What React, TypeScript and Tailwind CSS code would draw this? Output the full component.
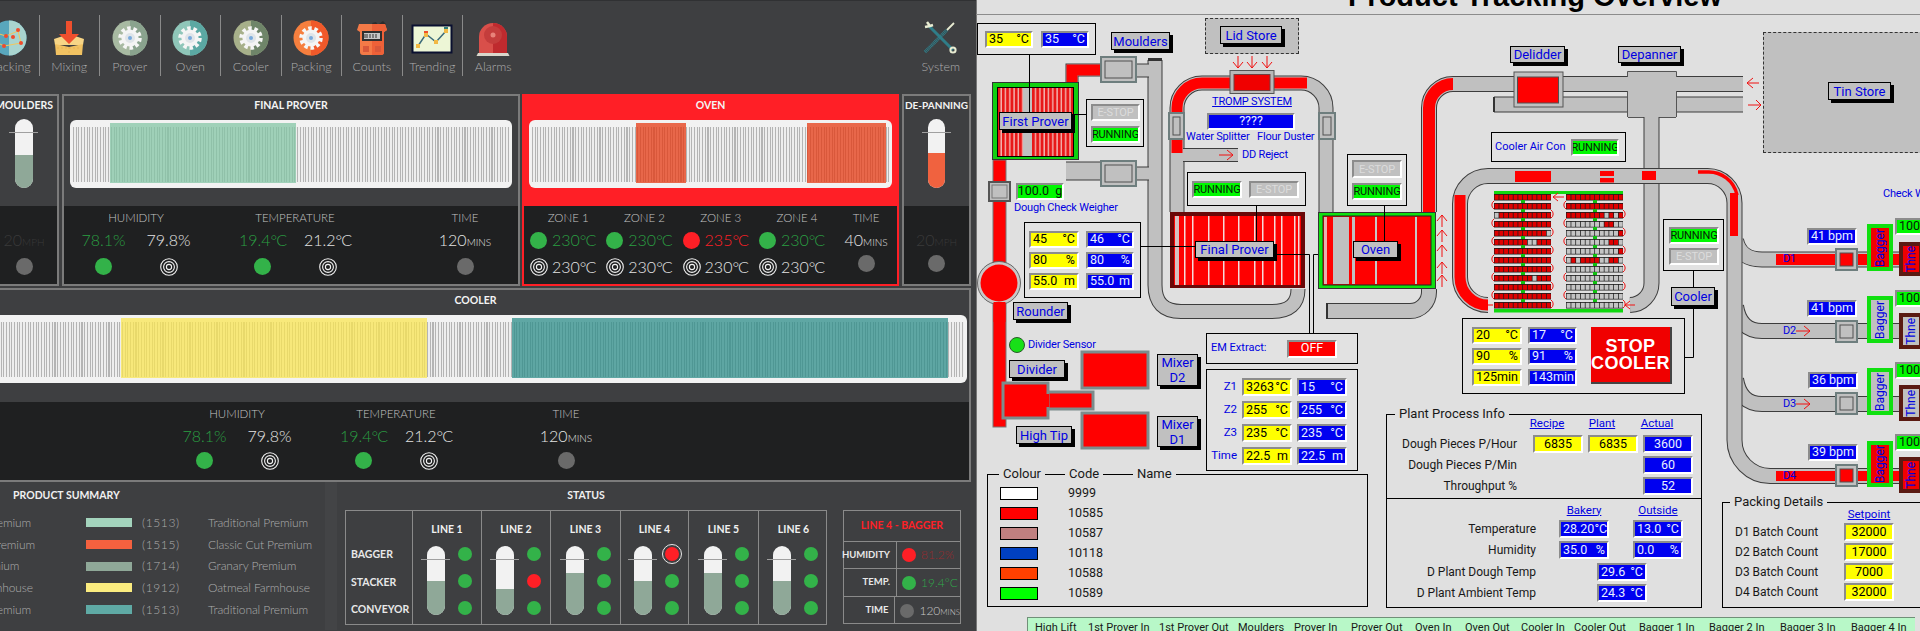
import React from 'react'

const stripes =
  'bg-[repeating-linear-gradient(90deg,#b4b4b4_0px,#b4b4b4_1px,#eeeeee_1px,#eeeeee_2.7px)]'

function Rings() {
  return (
    <svg width="18" height="18" viewBox="0 0 18 18" className="shrink-0">
      <circle cx="9" cy="9" r="8.3" fill="none" stroke="#f2f2f2" strokeWidth="1.1" />
      <circle cx="9" cy="9" r="5.4" fill="none" stroke="#f2f2f2" strokeWidth="1.1" />
      <circle cx="9" cy="9" r="2.6" fill="none" stroke="#f2f2f2" strokeWidth="1.1" />
    </svg>
  )
}

const Dot = ({ c = 'bg-[#33b249]', className = 'w-[17px] h-[17px]' }: { c?: string; className?: string }) => (
  <div className={`rounded-full shrink-0 ${c} ${className}`} />
)

const Val = ({ c = 'text-[#e4e4e4]', children }: { c?: string; children: React.ReactNode }) => (
  <div className={`h-[20px] flex items-center justify-center whitespace-nowrap text-[16px] font-light ${c}`}>
    <span>{children}</span>
  </div>
)

const Deg = ({ v }: { v: string }) => (
  <>
    {v}
    <span className="tracking-[-1px]">°C</span>
  </>
)

const Small = ({ children }: { children: React.ReactNode }) => <span className="text-[10px] tracking-normal">{children}</span>

function Label({ children }: { children: React.ReactNode }) {
  return <div className="h-[24px] flex items-center justify-center whitespace-nowrap text-[11.5px] font-light text-[#c4c4c4]">{children}</div>
}

function ThreeMetrics({ className, dotGap }: { className: string; dotGap: string }) {
  const groups = [
    { label: 'HUMIDITY', a: <>78.1%</>, b: <>79.8%</> },
    { label: 'TEMPERATURE', a: <Deg v="19.4" />, b: <Deg v="21.2" /> },
  ]
  return (
    <div className={`flex ${className}`}>
      {groups.map((g) => (
        <div key={g.label} className="w-[130px] mr-[29px]">
          <Label>{g.label}</Label>
          <div className="grid grid-cols-2">
            <Val c="text-[#2a9f42]">{g.a}</Val>
            <Val>{g.b}</Val>
            <div className={`flex justify-center ${dotGap}`}><Dot /></div>
            <div className={`flex justify-center ${dotGap}`}><Rings /></div>
          </div>
        </div>
      ))}
      <div className="w-[60px] ml-[46px]">
        <Label>TIME</Label>
        <Val>120<Small>MINS</Small></Val>
        <div className={`flex justify-center ${dotGap}`}><Dot c="bg-[#6a6a6a]" /></div>
      </div>
    </div>
  )
}

function Thermo({ fill, tone = 'bg-[#8fa898]' }: { fill: string; tone?: string }) {
  return (
    <div className="relative w-[17.5px] h-[69px] shrink-0">
      <div className="w-full h-full rounded-full overflow-hidden bg-[#f2f2f2] flex flex-col justify-end">
        <div className={`${fill} ${tone}`} />
      </div>
      <div className="absolute -left-[6px] top-[13px] w-[29px] h-px bg-[#a0a0a0]" />
    </div>
  )
}

function Bar({ className, overlays }: { className: string; overlays: string[] }) {
  return (
    <div className={`relative h-[68px] rounded-md bg-[#f2f2f2] pt-[7px] px-[3px] ${className}`}>
      <div className={`h-[55px] ${stripes}`} />
      {overlays.map((o) => (
        <div key={o} className={`absolute top-[3px] h-[60px] ${o}`} />
      ))}
    </div>
  )
}

function GearIcon({ a, b }: { a: string; b: string }) {
  return (
    <svg width="36" height="36" viewBox="0 0 36 36">
      <circle cx="18" cy="18" r="17.5" fill={a} />
      <path d="M18 .5A17.5 17.5 0 0 1 18 35.5Z" fill={b} />
      <circle cx="18" cy="18" r="9.5" fill="none" stroke="#f6f6f6" strokeWidth="4.5" strokeDasharray="3.4 2.57" />
      <circle cx="18" cy="18" r="8.6" fill="#f4f4f4" />
      <circle cx="18" cy="18" r="5" fill="#dfe4e8" />
      <circle cx="18" cy="18" r="2" fill="#78a9dc" />
    </svg>
  )
}

const navIcons: Record<string, React.ReactNode> = {
  Tracking: (
    <svg width="36" height="36" viewBox="0 0 36 36">
      <circle cx="18" cy="18" r="17.5" fill="#59a7bd" />
      <path d="M18 .5A17.5 17.5 0 0 1 18 35.5Z" fill="#a9d4cf" />
      <path d="M5 13l10 3 12-5 3 12-17 3-8-4z" fill="none" stroke="#f2c75c" strokeWidth="1" />
      <g fill="#ef4b2c">
        <circle cx="5" cy="13" r="2" /><circle cx="15" cy="16" r="2" /><circle cx="27" cy="10" r="2" />
        <circle cx="30" cy="23" r="2" /><circle cx="13" cy="26" r="2" /><circle cx="22" cy="17" r="2" />
      </g>
    </svg>
  ),
  Mixing: (
    <svg width="36" height="36" viewBox="0 0 36 36">
      <path d="M3 19l15-5 15 5-1 6H4z" fill="#f7d586" />
      <path d="M4 24l14 3 14-3-1 11H5z" fill="#f1c262" />
      <path d="M18 27v8M6 28h24" stroke="#e0a94a" strokeWidth=".6" strokeDasharray="2 2" />
      <path d="M15 1h6v13h7L18 24 8 14h7z" fill="#ef4f2d" />
    </svg>
  ),
  Counts: (
    <svg width="36" height="36" viewBox="0 0 36 36">
      <path d="M25 4l4-3 3 3-3 3zM18 3l4-1 2 3-4 1z" fill="#2c2c2c" />
      <path d="M5 4h26l2 6-3 2v20q0 3-3 3H9q-3 0-3-3V12L3 10z" fill="#f47a47" />
      <path d="M18 4h13l2 6-3 2v20q0 3-3 3h-9z" fill="#ee6138" />
      <rect x="8" y="11" width="20" height="10" fill="#2f2f2f" />
      <rect x="10" y="13" width="16" height="6" fill="#c7c7c7" />
      <path d="M11 18v-4M13 18v-4M16 18v-4M19 18v-4M22 18v-4" stroke="#333" strokeWidth="1" />
      <rect x="9" y="26" width="6" height="6" fill="#d9583a" /><rect x="21" y="26" width="6" height="6" fill="#d9583a" />
    </svg>
  ),
  Trending: (
    <svg width="42" height="36" viewBox="0 0 42 36">
      <rect x="1.5" y="5.5" width="39" height="27" fill="#edf6d6" stroke="#0a1030" strokeWidth="2" />
      <polyline points="7,26 15,14 25,22 35,11" fill="none" stroke="#3b6a78" strokeWidth="1.5" />
      <g fill="#f2b843">
        <rect x="5" y="24" width="4" height="4" /><rect x="13" y="13" width="4" height="4" />
        <rect x="23" y="20" width="4" height="4" /><rect x="33" y="9" width="4" height="4" />
      </g>
      <rect x="13" y="11" width="4" height="2" fill="#ef4f2d" /><rect x="33" y="7" width="4" height="2" fill="#2f7d78" />
    </svg>
  ),
  Alarms: (
    <svg width="36" height="36" viewBox="0 0 36 36">
      <path d="M4 33V17a14 14 0 0 1 28 0v16z" fill="#d94f4a" />
      <path d="M18 3a14 14 0 0 1 14 14v16H18z" fill="#bf2a2e" />
      <circle cx="18" cy="15" r="9" fill="#c43d3c" />
      <circle cx="18" cy="15" r="2.5" fill="#e8837a" />
      <path d="M3 33h30l2 4H1z" fill="#d9d6cb" />
    </svg>
  ),
  System: (
    <svg width="36" height="36" viewBox="0 0 36 36">
      <path d="M6 6l24 24" stroke="#2f7d88" strokeWidth="3" />
      <path d="M2 32L24 10" stroke="#2f7d88" strokeWidth="3.5" strokeDasharray="1 .6" />
      <path d="M24 10L31 3" stroke="#e8ecd2" strokeWidth="1.8" />
      <path d="M4 2l3 4 3-1M7 6L2 7" fill="none" stroke="#e8ecd2" strokeWidth="2.5" />
      <circle cx="30" cy="30" r="2.6" fill="none" stroke="#e8ecd2" strokeWidth="2" />
    </svg>
  ),
}

const gears: Record<string, [string, string]> = {
  Prover: ['#a8baa2', '#8aa38e'],
  Oven: ['#8fc6b9', '#5ba8a3'],
  Cooler: ['#a7b08a', '#6f8569'],
  Packing: ['#f67f3e', '#f0592a'],
}

const nav = ['Tracking', 'Mixing', 'Prover', 'Oven', 'Cooler', 'Packing', 'Counts', 'Trending', 'Alarms']

function NavItem({ name, last }: { name: string; last?: boolean }) {
  return (
    <div className={`w-[60.5px] h-[61px] mt-[14px] flex flex-col items-center ${last ? '' : 'border-r border-[#8a8a8a]'}`}>
      <div className="mt-[5px] h-[36px] flex items-center justify-center">
        {gears[name] ? <GearIcon a={gears[name][0]} b={gears[name][1]} /> : navIcons[name]}
      </div>
      <div className="mt-[3px] h-[16px] flex items-center text-[12.5px] font-light text-[#adadad]">{name}</div>
    </div>
  )
}

const title = 'h-[19px] flex items-center justify-center whitespace-nowrap text-[10.5px] font-bold text-[#f4f4f4]'

const products = [
  { name: 'Traditional Premium', code: '(1513)', c: 'bg-[#a3d3bc]' },
  { name: 'Classic Cut Premium', code: '(1515)', c: 'bg-[#f4613f]' },
  { name: 'Granary Premium', code: '(1714)', c: 'bg-[#8fa898]' },
  { name: 'Oatmeal Farmhouse', code: '(1912)', c: 'bg-[#fbec7f]' },
  { name: 'Traditional Premium', code: '(1513)', c: 'bg-[#5faaa5]' },
]

const lines = [
  { n: 'LINE 1', fill: 'h-[34px]', ml: 'ml-[14px]', s: ['g', 'g', 'g'] },
  { n: 'LINE 2', fill: 'h-[26px]', ml: 'ml-[14px]', s: ['g', 'r', 'g'] },
  { n: 'LINE 3', fill: 'h-[42px]', ml: 'ml-[15px]', s: ['g', 'g', 'g'] },
  { n: 'LINE 4', fill: 'h-[34px]', ml: 'ml-[13px]', s: ['a', 'g', 'g'] },
  { n: 'LINE 5', fill: 'h-[42px]', ml: 'ml-[15px]', s: ['g', 'g', 'g'] },
  { n: 'LINE 6', fill: 'h-[34px]', ml: 'ml-[14px]', s: ['g', 'g', 'g'] },
]

function StatusDot({ s }: { s: string }) {
  if (s === 'a')
    return (
      <div className="w-[14px] h-[14px] relative">
        <div className="w-[14px] h-[14px] rounded-full bg-[#ff1f26]" />
        <div className="absolute -left-[3px] -top-[3px] w-[20px] h-[20px] rounded-full border border-[#e8e8e8]" />
      </div>
    )
  return <Dot c={s === 'r' ? 'bg-[#ff1f26]' : 'bg-[#33b249]'} className="w-[14px] h-[14px]" />
}

function Dashboard() {
  return (
    <div className="w-[976px] h-[631px] shrink-0 overflow-hidden bg-[#3e3f41] font-['Lato',sans-serif] flex flex-col">
      <div className="h-[94px] shrink-0 border-t-2 border-[#303133] flex -mt-px">
        <div className="flex -ml-[21px]">
          {nav.map((n, i) => (
            <NavItem key={n} name={n} last={i === nav.length - 1} />
          ))}
        </div>
        <div className="ml-auto mr-[5px]"><NavItem name="System" last /></div>
      </div>

      <div className="h-[192px] shrink-0 flex mt-px">
        <div className="-ml-[11px] w-[70px] border-2 border-[#7b7b7b] flex flex-col">
          <div className="h-[110px]">
            <div className={title}>MOULDERS</div>
            <div className="flex justify-center mt-[4px]"><Thermo fill="h-[33px]" /></div>
          </div>
          <div className="h-[78px] bg-[#1f2021] flex flex-col items-center pt-[24px]">
            <Val c="text-[#3a3a3a]">20<Small>MPH</Small></Val>
            <div className="mt-[8px]"><Dot c="bg-[#6a6a6a]" /></div>
          </div>
        </div>

        <div className="ml-[3px] w-[458px] border-2 border-[#7b7b7b] flex flex-col">
          <div className="h-[110px]">
            <div className={title}>FINAL PROVER</div>
            <Bar className="mt-[5px] mx-[6px]" overlays={['left-[40px] w-[186px] bg-[#84c6a6]/75']} />
          </div>
          <ThreeMetrics className="h-[78px] bg-[#1f2021] pl-[7px]" dotGap="mt-[8px]" />
        </div>

        <div className="ml-[2px] w-[377px] border-2 border-[#ff1f26] flex flex-col bg-[#ff1f26]">
          <div className="h-[110px]">
            <div className={title}>OVEN</div>
            <Bar className="mt-[5px] mx-[5px]" overlays={['left-[107px] w-[50px] bg-[#e63a13]/75', 'left-[278px] w-[79px] bg-[#e63a13]/75']} />
          </div>
          <div className="h-[78px] bg-[#1f2021] flex pl-[6px]">
            {['ZONE 1', 'ZONE 2', 'ZONE 3', 'ZONE 4'].map((z, i) => (
              <div key={z} className="w-[76.5px]">
                <Label>{z}</Label>
                <div className="flex items-center h-[20px] gap-[5px]">
                  <Dot c={i === 2 ? 'bg-[#ff1f26]' : 'bg-[#33b249]'} />
                  <Val c={i === 2 ? 'text-[#ff1f26]' : 'text-[#2a9f42]'}><Deg v={i === 2 ? '235' : '230'} /></Val>
                </div>
                <div className="flex items-center h-[18px] gap-[4px] mt-[8px]">
                  <Rings />
                  <Val><Deg v="230" /></Val>
                </div>
              </div>
            ))}
            <div className="w-[62px]">
              <Label>TIME</Label>
              <Val>40<Small>MINS</Small></Val>
              <div className="flex justify-center mt-[5px]"><Dot c="bg-[#6a6a6a]" /></div>
            </div>
          </div>
        </div>

        <div className="ml-[3px] w-[69px] border-2 border-[#7b7b7b] flex flex-col">
          <div className="h-[110px]">
            <div className="h-[19px] flex items-center justify-center whitespace-nowrap text-[10px] font-bold text-[#f4f4f4]">DE-PANNING</div>
            <div className="flex justify-center mt-[4px]"><Thermo fill="h-[35px]" tone="bg-[#f0623f]" /></div>
          </div>
          <div className="h-[78px] bg-[#1f2021] flex flex-col items-center pt-[24px]">
            <Val c="text-[#3a3a3a]">20<Small>MPH</Small></Val>
            <div className="mt-[5px]"><Dot c="bg-[#6a6a6a]" /></div>
          </div>
        </div>
      </div>

      <div className="h-[194px] shrink-0 mt-[2px] -ml-[20px] w-[991px] border-2 border-[#7b7b7b] flex flex-col">
        <div className="h-[112px]">
          <div className="h-[22px] flex items-center justify-center text-[10.5px] font-bold text-[#f4f4f4]">COOLER</div>
          <Bar className="mt-[3px] mx-[2px]" overlays={['left-[137px] w-[306px] bg-[#f9e653]/75', 'left-[528px] w-[436px] bg-[#2e8e89]/75']} />
        </div>
        <ThreeMetrics className="h-[78px] bg-[#1f2021] pl-[190px]" dotGap="mt-[6px]" />
      </div>

      <div className="h-[148px] shrink-0 flex">
        <div className="w-[325px] shrink-0">
          <div className="pl-[13px] h-[28px] flex items-center text-[10.5px] font-bold text-[#f0f0f0]">PRODUCT SUMMARY</div>
          <div className="mt-[2px]">
            {products.map((p, i) => (
              <div key={i} className="h-[21.7px] flex items-center text-[12px] tracking-[-0.1px] font-light text-[#adadad] whitespace-nowrap">
                <div className="-ml-[69px] w-[155px] shrink-0">{p.name}</div>
                <div className={`w-[46px] h-[9px] shrink-0 ${p.c}`} />
                <div className="ml-[10px] w-[66px] shrink-0 tracking-[0.6px]">{p.code}</div>
                <div>{p.name}</div>
              </div>
            ))}
          </div>
        </div>
        <div className="w-[12px] bg-[#434446]" />
        <div className="flex-1 pl-[8px]">
          <div className="w-[482px] h-[28px] flex items-center justify-center text-[10.5px] font-bold text-[#f0f0f0]">STATUS</div>
          <div className="flex">
            <div className="w-[482px] h-[115px] border border-[#8a8a8a] grid grid-cols-[66px_69px_69px_70px_68px_70px_70px]">
              <div className="pt-[37px] pl-[5px] text-[10.5px] font-bold text-[#e8e8e8] flex flex-col gap-[14.5px] leading-[13px]">
                <div>BAGGER</div><div>STACKER</div><div>CONVEYOR</div>
              </div>
              {lines.map((l) => (
                <div key={l.n} className="border-l border-[#8a8a8a]">
                  <div className="h-[35px] pt-[2px] flex items-center justify-center text-[10.5px] font-bold text-[#f0f0f0]">{l.n}</div>
                  <div className={`flex ${l.ml}`}>
                    <Thermo fill={l.fill} />
                    <div className="ml-[13px] pt-px flex flex-col gap-[13px]">
                      {l.s.map((s, i) => <StatusDot key={i} s={s} />)}
                    </div>
                  </div>
                </div>
              ))}
            </div>
            <div className="ml-[16px] w-[118px] h-[114px] border border-[#8a8a8a] text-[9.5px] font-bold text-[#e8e8e8]">
              <div className="h-[30px] flex items-center justify-center text-[10.5px] text-[#ff1f26]">LINE 4 - BAGGER</div>
              {[
                { k: 'HUMIDITY', d: 'bg-[#ff1f26]', v: '81.2%', c: 'text-[#9a2a2e]', h: 'h-[27px]' },
                { k: 'TEMP.', d: 'bg-[#33b249]', v: '19.4°C', c: 'text-[#2fa94a]', h: 'h-[28px]' },
                { k: 'TIME', d: 'bg-[#6a6a6a]', v: '120', c: 'text-[#c8c8c8]', h: 'h-[28px]' },
              ].map((r) => (
                <div key={r.k} className={`flex border-t border-[#8a8a8a] ${r.h}`}>
                  <div className="w-[53px] flex items-center justify-end pr-[6px] border-r border-[#8a8a8a]">{r.k}</div>
                  <div className="flex items-center pl-[5px] gap-[5px] whitespace-nowrap">
                    <Dot c={r.d} className="w-[14px] h-[14px]" />
                    <span className={`text-[12px] font-light ${r.c}`}>{r.v}{r.k === 'TIME' && <span className="text-[8px]">MINS</span>}</span>
                  </div>
                </div>
              ))}
            </div>
          </div>
        </div>
      </div>
    </div>
  )
}

/* ---------- plant overview ---------- */

const tones: Record<string, string> = {
  y: 'bg-[#ffff00] text-black',
  b: 'bg-[#0000f0] text-[#e8f0ff]',
  g: 'bg-[#00f800] text-[#082008]',
  e: 'bg-[#c0c0c0] text-[#dcdcdc]',
  r: 'bg-[#ff0000] text-white',
}

function F({ t, v, u, className = 'h-[17px]' }: { t: string; v: string; u?: string; className?: string }) {
  const small = v === 'RUNNING' || v === 'E-STOP'
  return (
    <div className={`flex items-center ${u ? 'justify-between' : 'justify-center'} px-[2px] border-2 border-t-[#8c8c8c] border-l-[#8c8c8c] border-r-white border-b-white leading-none whitespace-nowrap overflow-hidden ${small ? 'text-[11px] tracking-[-0.1px]' : 'text-[12.5px]'} ${tones[t]} ${className}`}>
      <span>{v}</span>
      {u && <span>{u}</span>}
    </div>
  )
}

function Btn({ className, children }: { className: string; children: React.ReactNode }) {
  return (
    <div className={`absolute flex items-center justify-center text-center leading-[15px] bg-[#c0c0c0] border border-black shadow-[3px_3px_0_#000] text-[13px] text-[#0000e0] whitespace-nowrap ${className}`}>
      {children}
    </div>
  )
}

const Box = ({ className, children }: { className: string; children?: React.ReactNode }) => (
  <div className={`absolute border border-black bg-[#e2e2e2] ${className}`}>{children}</div>
)

const Blue = ({ className, children }: { className: string; children: React.ReactNode }) => (
  <div className={`absolute text-[11px] tracking-[-0.2px] text-[#0000e0] whitespace-pre leading-[16px] ${className}`}>{children}</div>
)

function Legend({ className, children }: { className: string; children: React.ReactNode }) {
  return <div className={`absolute bg-[#e0e0e0] px-[4px] leading-[16px] text-[13px] text-[#181818] ${className}`}>{children}</div>
}

const Pipe = ({ d, w = 14 }: { d: string; w?: number }) => (
  <>
    <path d={d} fill="none" stroke="#3c3c3c" strokeWidth={w + 2} />
    <path d={d} fill="none" stroke="#c0c0c0" strokeWidth={w} />
  </>
)
const Red = ({ d, w = 11 }: { d: string; w?: number }) => <path d={d} fill="none" stroke="#ff0000" strokeWidth={w} />

const Unit = ({ x, y, w, h, red }: { x: number; y: number; w: number; h: number; red?: boolean }) => (
  <>
    <rect x={x} y={y} width={w} height={h} fill="#c0c0c0" stroke="#6e7e7e" strokeWidth="2" />
    <rect x={x + 4} y={y + 4} width={w - 8} height={h - 8} fill={red ? '#ff0000' : '#c0c0c0'} stroke="#505050" strokeWidth="1" />
  </>
)

const rackA = ['111111111111', '111111111111', '011111111111', '111111111111', '111111111110', '111111100111', '111111111111', '111111111111', '111111111111', '111111110111', '111111111111', '111111111111', '111111111111']
const rackB = ['111111111111', '111111111111', '111111110101', '000000001100', '000000000001', '000000000110', '000000000001', '010111100110', '000000000000', '000000000000', '000000000000', '000000000000', '000000000000']

function Rack({ x, rows }: { x: number; rows: string[] }) {
  return (
    <g>
      {rows.map((r, i) => (
        <g key={i}>
          <rect x={x} y={194 + 9 * i} width="57" height="6.5" fill="#1a1a1a" />
          {r.split('').map((c, j) => (
            <rect key={j} x={x + 0.6 + j * 4.74} y={194.8 + 9 * i} width="4" height="5" fill={c === '1' ? '#e00000' : '#c4c4c4'} />
          ))}
          {i < 12 && <rect x={x + 27} y={200 + 9 * i} width="4" height="3" fill="#10c010" />}
          {i % 2 === 0 && i < 12 && <path d={`M${x} ${201 + 9 * i}a4 4.5 0 0 0 0 8`} fill="none" stroke="#f01010" strokeWidth="1" />}
          {i % 2 === 1 && i < 12 && <path d={`M${x + 57} ${201 + 9 * i}a4 4.5 0 0 1 0 8`} fill="none" stroke="#f01010" strokeWidth="1" />}
        </g>
      ))}
    </g>
  )
}

function Diagram() {
  return (
    <svg className="absolute inset-0" width="944" height="631" viewBox="976 0 944 631">
      <defs>
        <pattern id="pr" width="4.3" height="10" patternUnits="userSpaceOnUse">
          <rect width="4.3" height="10" fill="#e81818" />
          <rect x="2.9" width="1.4" height="10" fill="#f2b4b0" />
        </pattern>
      </defs>
      <line x1="976.5" y1="0" x2="976.5" y2="631" stroke="#777" />
      <line x1="976" y1="14.5" x2="1920" y2="14.5" stroke="#8c8c8c" />

      {/* moulders and their pipe */}
      <Pipe d="M1155 60V285Q1155 311.5 1181 311.5H1272Q1298 311.5 1298 289" w={13} />
      <rect x="1148" y="58" width="14" height="3" fill="#333" />
      <Pipe d="M1137 70.5H1149" w={12} />
      <Pipe d="M1137 173.5H1149" w={12} />
      <Pipe d="M1066 171H1100" w={17} />
      <Pipe d="M1072 84V70H1100" w={11} />
      <Red d="M1072 84V70H1105" />
      <Unit x={1101} y={57} w={35} h={25} />
      <Unit x={1101} y={161} w={35} h={25} />

      {/* first prover and rounder */}
      <rect x="993" y="160" width="13" height="267" fill="#ff0000" stroke="#777" />
      <rect x="992.5" y="82.5" width="86" height="77" fill="#10d010" stroke="#333" />
      <rect x="997.5" y="87.5" width="76" height="69" fill="url(#pr)" stroke="#000" />
      <rect x="1023" y="88" width="9" height="68" fill="#c0c0c0" />
      <line x1="1029.5" y1="55" x2="1029.5" y2="112" stroke="#000" />
      <line x1="1072" y1="114.5" x2="1086" y2="114.5" stroke="#000" />
      <rect x="989" y="182" width="21" height="19" fill="#c0c0c0" stroke="#555" strokeWidth="2" />
      <rect x="992" y="185" width="15" height="13" fill="#c0c0c0" stroke="#777" />
      <circle cx="999" cy="283" r="21.5" fill="#c8c8c8" stroke="#666" />
      <circle cx="999" cy="283" r="18.5" fill="#ff0000" />
      <rect x="993.5" y="302" width="12" height="20" fill="#ff0000" />

      {/* tromp line */}
      <Pipe d="M1177 212V108A25 25 0 0 1 1202 83H1301A25 25 0 0 1 1326 108V212" w={13} />
      <Red d="M1177 153V108A25 25 0 0 1 1202 83H1307" />
      <Pipe d="M1183 155H1238" w={12} />
      <rect x="1230" y="70.5" width="44" height="23" fill="#b8b8b8" stroke="#555" />
      <rect x="1234" y="74.5" width="36" height="16" fill="#f00000" stroke="#704040" />
      <Unit x={1169} y={113} w={15} h={26} />
      <Unit x={1319} y={113} w={16} h={26} />

      {/* final prover */}
      <rect x="1170" y="212" width="135" height="76" fill="#6a0808" />
      <rect x="1174" y="216" width="127" height="69" fill="#ff0000" />
      <rect x="1175" y="216" width="4" height="69" fill="#d8c0c0" />
      {[1184, 1192, 1208, 1223, 1238, 1254, 1262, 1274, 1281, 1294, 1298].map((x) => (
        <rect key={x} x={x} y="216" width="1.5" height="69" fill="#f4d8d8" />
      ))}
      <line x1="1256.5" y1="206" x2="1256.5" y2="241" stroke="#000" />
      <line x1="1141" y1="246.5" x2="1195" y2="246.5" stroke="#000" />
      <path d="M1274 254.5H1309.5V333M1313.5 333V254.5H1353" fill="none" stroke="#000" />

      {/* oven and delidder line */}
      <Pipe d="M1429 212V108A24 24 0 0 1 1453 84H1743" />
      <Red d="M1429 212V108A24 24 0 0 1 1453 84" w={12} />
      <Pipe d="M1494 104.5H1743" />
      <rect x="1493" y="97" width="2" height="15" fill="#333" />
      <Pipe d="M1429 289V292A19 19 0 0 1 1410 311H1327" />
      <rect x="1326" y="303" width="2" height="16" fill="#333" />
      <rect x="1318.5" y="212.5" width="117" height="76" fill="#10e010" stroke="#333" />
      <rect x="1323" y="216" width="108" height="69" fill="#ff0000" stroke="#222" />
      <rect x="1324" y="217" width="3" height="67" fill="#e8b0b0" />
      <rect x="1333" y="217" width="16" height="67" fill="#c0c0c0" />
      <rect x="1352" y="217" width="3" height="67" fill="#c0c0c0" />
      <rect x="1375" y="217" width="2" height="67" fill="#c8c8c8" />
      <rect x="1415" y="217" width="2" height="67" fill="#c8c8c8" />
      <line x1="1384.5" y1="206" x2="1384.5" y2="241" stroke="#000" />
      <rect x="1514" y="72" width="49" height="35" fill="#c0c0c0" stroke="#555" />
      <rect x="1517.5" y="77" width="41" height="26" fill="#ff0000" stroke="#505050" />
      <path d="M1627.5 117V91M1676.5 117V91M1627.5 71.5H1676.5V77M1627.5 71.5V77" fill="none" stroke="#555" />
      <rect x="1628" y="91" width="48" height="26" fill="#c0c0c0" />
      <path d="M1628 117.5H1644M1659 117.5H1676" stroke="#555" />
      <rect x="1628" y="72" width="48" height="5" fill="#c0c0c0" />
      <rect x="1632" y="77" width="40" height="14" fill="#c0c0c0" />

      {/* cooler loop */}
      <Pipe d="M1651.5 117V283A22 22 0 0 1 1630 305" />
      <Pipe d="M1736 240Q1740 259.5 1762 259.5H1920" />
      <Pipe d="M1736 306Q1740 331 1762 331H1920" />
      <Pipe d="M1736 379Q1740 404 1762 404H1920" />
      <Pipe d="M1488 305A28 28 0 0 1 1460 277V204A28 28 0 0 1 1488 176H1707A27 27 0 0 1 1734.5 203V440A36 36 0 0 0 1770 476H1920" />
      <Red d="M1488 305A28 28 0 0 1 1460 277V195" />
      <rect x="1515" y="171" width="36" height="11" fill="#ff0000" />
      <rect x="1600" y="171" width="14" height="5" fill="#ff0000" />
      <rect x="1600" y="178" width="14" height="4.5" fill="#ff0000" />
      <rect x="1642" y="171" width="14" height="9" fill="#ff0000" />
      <path d="M1698 172H1707A29 29 0 0 1 1737 195" fill="none" stroke="#ff0000" strokeWidth="3.5" />
      <rect x="1730" y="193" width="8" height="43" fill="#ff0000" />
      <rect x="1776" y="254" width="144" height="11" fill="#ff0000" />
      <rect x="1776" y="471" width="144" height="10" fill="#ff0000" />
      <Unit x={1836} y={249} w={21} h={21} red />
      <Unit x={1836} y={321} w={21} h={21} />
      <Unit x={1836} y={393} w={21} h={21} />
      <Unit x={1836} y={465} w={21} h={21} red />

      {/* racks */}
      <rect x="1494" y="191" width="129" height="3" fill="#10d810" />
      <rect x="1494" y="309" width="129" height="3.5" fill="#10d810" />
      <Rack x={1494} rows={rackA} />
      <Rack x={1566} rows={rackB} />
      <line x1="1488" y1="305" x2="1493" y2="305" stroke="#f00" />

      {/* connectors */}
      <path d="M1685 357.5H1693.5V306M1693.5 271V287" fill="none" stroke="#000" />

      {/* arrows */}
      <g fill="none" stroke="#f01010" strokeWidth="1">
        {[1238, 1252, 1267].map((x) => <path key={x} d={`M${x} 56V68M${x - 5} 62L${x} 68L${x + 5} 62`} />)}
        {[215, 230, 245, 262, 275].map((y) => <path key={y} d={`M1442 ${y + 12}V${y}M1437 ${y + 6}L1442 ${y}L1447 ${y + 6}`} />)}
        <path d="M1219 155H1233M1227 150L1233 155L1227 160" />
        <path d="M1564 197H1553M1558 193L1553 197L1558 201" />
        <path d="M1635 305H1625M1630 301L1625 305L1630 309" />
        <path d="M1759 83H1747M1753 78L1747 83L1753 88" />
        <path d="M1748 105H1761M1756 100L1761 105L1756 110" />
        <path d="M1796 331H1810M1804 326L1810 331L1804 336" />
        <path d="M1796 404H1810M1804 399L1810 404L1804 409" />
      </g>

      {/* mixers and divider */}
      <rect x="1082" y="352" width="66" height="36" fill="#ff0000" stroke="#7c8c8c" strokeWidth="3" />
      <rect x="1082" y="413" width="66" height="35" fill="#ff0000" stroke="#7c8c8c" strokeWidth="3" />
      <rect x="1046" y="392" width="47" height="17" fill="#ff0000" stroke="#7c8c8c" strokeWidth="3" />
      <rect x="1003" y="383" width="45" height="35" fill="#ff0000" stroke="#7c8c8c" strokeWidth="3" />
      <rect x="1045" y="394" width="4" height="13" fill="#ff0000" />
    </svg>
  )
}

function Bagger({ className, red, children }: { className: string; red?: boolean; children: string }) {
  return (
    <div className={`absolute border-4 flex items-center justify-center overflow-hidden ${red ? 'bg-[#f00000]' : 'bg-[#c0c0c0]'} ${className}`}>
      <span className="[writing-mode:vertical-rl] rotate-180 text-[12px] leading-none text-[#0000e0]">{children}</span>
    </div>
  )
}

const stripItems = [
  ['High Lift', 'w-[53px]'], ['1st Prover In', 'w-[71px]'], ['1st Prover Out', 'w-[79px]'], ['Moulders', 'w-[56px]'],
  ['Prover In', 'w-[57px]'], ['Prover Out', 'w-[64px]'], ['Oven In', 'w-[50px]'], ['Oven Out', 'w-[56px]'],
  ['Cooler In', 'w-[53px]'], ['Cooler Out', 'w-[65px]'], ['Bagger 1 In', 'w-[70px]'], ['Bagger 2 In', 'w-[71px]'],
  ['Bagger 3 In', 'w-[71px]'], ['Bagger 4 In', 'w-[60px]'],
]

const swatches = [
  ['9999', 'bg-white'], ['10585', 'bg-[#ff0000]'], ['10587', 'bg-[#c08080]'],
  ['10118', 'bg-[#0040c0]'], ['10588', 'bg-[#ff4000]'], ['10589', 'bg-[#00ff00]'],
]

function Plant() {
  return (
    <div className="relative flex-1 h-[631px] overflow-hidden bg-[#e0e0e0] font-['Roboto',sans-serif] text-[12px]">
      <Diagram />
      <div className="absolute left-[372px] -top-[20px] font-['Liberation_Sans',sans-serif] text-[29px] leading-[32px] font-bold text-black whitespace-nowrap">
        Product Tracking Overview
      </div>

      <Box className="left-[1px] top-[23px] w-[119px] h-[32px] flex gap-[8px] pl-[7px] pt-[7px]">
        <F t="y" v="35" u="°C" className="w-[48px] h-[17px]" />
        <F t="b" v="35" u="°C" className="w-[48px] h-[17px]" />
      </Box>
      <Btn className="left-[135px] top-[32px] w-[59px] h-[18px]">Moulders</Btn>
      <div className="absolute left-[229px] top-[18px] w-[94px] h-[36px] bg-[#c0c0c0] border border-dashed border-[#333]" />
      <Btn className="left-[244px] top-[26px] w-[62px] h-[18px]">Lid Store</Btn>
      <Btn className="left-[23px] top-[112px] w-[73px] h-[18px]">First Prover</Btn>
      <Box className="left-[110px] top-[99px] w-[58px] h-[48px] flex flex-col gap-[5px] pl-[4px] pt-[4px]">
        <F t="e" v="E-STOP" className="w-[49px] h-[17px]" />
        <F t="g" v="RUNNING" className="w-[49px] h-[17px]" />
      </Box>
      <F t="g" v={'100.0\u00a0\u00a0g'} className="absolute left-[40px] top-[183px] w-[48px] h-[17px]" />
      <Blue className="left-[38px] top-[200px]">Dough Check Weigher</Blue>
      <Box className="left-[48px] top-[222px] w-[117px] h-[76px] grid grid-cols-[50px_48px] gap-x-[7px] gap-y-[4px] pl-[4px] pt-[8px] content-start">
        <F t="y" v="45" u="°C" /><F t="b" v="46" u="°C" />
        <F t="y" v="80" u="%" /><F t="b" v="80" u="%" />
        <F t="y" v="55.0" u="m" /><F t="b" v="55.0" u="m" />
      </Box>
      <Btn className="left-[37px] top-[302px] w-[55px] h-[18px]">Rounder</Btn>

      <Blue className="left-[226px] top-[94px] w-[100px] text-center underline">TROMP SYSTEM</Blue>
      <F t="b" v="????" className="absolute left-[231px] top-[113px] w-[88px] h-[17px]" />
      <Blue className="left-[210px] top-[129px]">Water Splitter   Flour Duster</Blue>
      <Blue className="left-[266px] top-[147px]">DD Reject</Blue>
      <Box className="left-[211px] top-[172px] w-[119px] h-[34px] flex gap-[7px] pl-[4px] pt-[8px]">
        <F t="g" v="RUNNING" className="w-[50px] h-[17px]" />
        <F t="e" v="E-STOP" className="w-[50px] h-[17px]" />
      </Box>
      <Btn className="left-[219px] top-[241px] w-[79px] h-[17px]">Final Prover</Btn>

      <Box className="left-[371px] top-[154px] w-[60px] h-[52px] flex flex-col gap-[5px] pl-[4px] pt-[5px]">
        <F t="e" v="E-STOP" className="w-[50px] h-[18px]" />
        <F t="g" v="RUNNING" className="w-[50px] h-[17px]" />
      </Box>
      <Btn className="left-[377px] top-[241px] w-[45px] h-[17px]">Oven</Btn>
      <Btn className="left-[534px] top-[46px] w-[55px] h-[17px]">Delidder</Btn>
      <Btn className="left-[642px] top-[46px] w-[63px] h-[17px]">Depanner</Btn>
      <div className="absolute left-[787px] top-[32px] w-[160px] h-[121px] bg-[#c0c0c0] border border-dashed border-[#333]" />
      <Btn className="left-[852px] top-[82px] w-[63px] h-[18px]">Tin Store</Btn>
      <Box className="left-[515px] top-[132px] w-[135px] h-[30px] flex items-center justify-between pl-[3px] pr-[6px]">
        <span className="text-[#0000e0] text-[11px] whitespace-nowrap">Cooler Air Con</span>
        <F t="g" v="RUNNING" className="w-[48px] h-[17px]" />
      </Box>
      <Box className="left-[687px] top-[219px] w-[61px] h-[52px] flex flex-col gap-[4px] pl-[5px] pt-[7px]">
        <F t="g" v="RUNNING" className="w-[50px] h-[17px]" />
        <F t="e" v="E-STOP" className="w-[50px] h-[17px]" />
      </Box>
      <Btn className="left-[695px] top-[287px] w-[44px] h-[19px]">Cooler</Btn>
      <Blue className="left-[907px] top-[186px]">Check Weigher</Blue>

      <Box className="left-[486px] top-[318px] w-[223px] h-[76px] flex pl-[9px] pt-[8px]">
        <div className="grid grid-cols-[50px_49px] gap-x-[6px] gap-y-[4px] content-start">
          <F t="y" v="20" u="°C" /><F t="b" v="17" u="°C" />
          <F t="y" v="90" u="%" /><F t="b" v="91" u="%" />
          <F t="y" v="125" u="min" /><F t="b" v="143" u="min" />
        </div>
        <div className="ml-[14px] w-[81px] h-[57px] bg-[#f00000] border-r-2 border-b-2 border-[#444] flex items-center justify-center text-center font-['Liberation_Sans',sans-serif] font-bold text-[18px] leading-[17px] tracking-[0.3px] text-white">
          STOP<br />COOLER
        </div>
      </Box>

      {[
        { f: 'left-[831px] top-[228px]', v: '41' },
        { f: 'left-[831px] top-[300px]', v: '41' },
        { f: 'left-[832px] top-[372px]', v: '36' },
        { f: 'left-[832px] top-[444px]', v: '39' },
      ].map((b) => (
        <F key={b.f} t="b" v={b.v} u="bpm" className={`absolute w-[50px] h-[17px] ${b.f}`} />
      ))}
      <Blue className="left-[807px] top-[251px]">D1</Blue>
      <Blue className="left-[807px] top-[323px]">D2</Blue>
      <Blue className="left-[807px] top-[396px]">D3</Blue>
      <Blue className="left-[807px] top-[468px]">D4</Blue>
      <Bagger red className="left-[891px] top-[224px] w-[26px] h-[47px] border-[#10e010]">Bagger</Bagger>
      <Bagger className="left-[891px] top-[296px] w-[26px] h-[47px] border-[#10e010]">Bagger</Bagger>
      <Bagger className="left-[891px] top-[368px] w-[26px] h-[47px] border-[#10e010]">Bagger</Bagger>
      <Bagger red className="left-[891px] top-[441px] w-[26px] h-[46px] border-[#10e010]">Bagger</Bagger>
      <Bagger red className="left-[923px] top-[242px] w-[24px] h-[34px] border-[#5a1a12]">Thne</Bagger>
      <Bagger className="left-[923px] top-[313px] w-[24px] h-[36px] border-[#5a1a12]">Thne</Bagger>
      <Bagger className="left-[923px] top-[385px] w-[24px] h-[36px] border-[#5a1a12]">Thne</Bagger>
      <Bagger red className="left-[923px] top-[457px] w-[24px] h-[36px] border-[#5a1a12]">Thne</Bagger>
      {['top-[218px]', 'top-[290px]', 'top-[362px]', 'top-[434px]'].map((t) => (
        <F key={t} t="g" v="100" className={`absolute left-[919px] w-[32px] h-[17px] justify-start! ${t}`} />
      ))}

      <div className="absolute left-[33px] top-[337px] w-[16px] h-[16px] rounded-full bg-[#18e018] border border-[#2a5a2a]" />
      <Blue className="left-[52px] top-[337px]">Divider Sensor</Blue>
      <Btn className="left-[33px] top-[360px] w-[56px] h-[18px]">Divider</Btn>
      <Btn className="left-[40px] top-[426px] w-[56px] h-[18px]">High Tip</Btn>
      <Btn className="left-[181px] top-[354px] w-[41px] h-[32px]">Mixer<br />D2</Btn>
      <Btn className="left-[181px] top-[416px] w-[41px] h-[31px]">Mixer<br />D1</Btn>

      <Box className="left-[230px] top-[333px] w-[152px] h-[31px] flex items-center justify-between pl-[4px] pr-[20px]">
        <span className="text-[#0000e0] text-[11px]">EM Extract:</span>
        <F t="r" v="OFF" className="w-[50px] h-[18px]" />
      </Box>
      <Box className="left-[230px] top-[369px] w-[152px] h-[102px] grid grid-cols-[30px_50px_50px] gap-x-[5px] gap-y-[5px] pt-[8px] content-start items-center">
        {[
          ['Z1', '3263', '15'], ['Z2', '255', '255'], ['Z3', '235', '235'], ['Time', '22.5', '22.5'],
        ].map(([l, a, b]) => (
          <React.Fragment key={l}>
            <span className="text-right text-[#0000e0] text-[11.5px] leading-none">{l}</span>
            <F t="y" v={a} u={l === 'Time' ? 'm' : '°C'} className="h-[18px]" />
            <F t="b" v={b} u={l === 'Time' ? 'm' : '°C'} className="h-[18px]" />
          </React.Fragment>
        ))}
      </Box>

      <div className="absolute left-[11px] top-[474px] w-[381px] h-[133px] border border-black pt-[12px] pl-[12px] flex flex-col gap-[8px]">
        {swatches.map(([code, c]) => (
          <div key={code} className="flex items-center h-[12px]">
            <div className={`w-[38px] h-[13px] border border-black ${c}`} />
            <span className="ml-[30px] text-[12.5px] text-[#181818]">{code}</span>
          </div>
        ))}
        <Legend className="left-[11px] -top-[9px]">Colour</Legend>
        <Legend className="left-[77px] -top-[9px]">Code</Legend>
        <Legend className="left-[145px] -top-[9px]">Name</Legend>
      </div>

      <div className="absolute left-[410px] top-[414px] w-[316px] h-[194px] border border-black text-[12px] text-[#181818]">
        <Legend className="left-[8px] -top-[9px]">Plant Process Info</Legend>
        <div className="h-[84px] border-b border-black grid grid-cols-[130px_50px_50px_50px] gap-x-[5px] gap-y-[3px] content-start">
          <div />
          <Link>Recipe</Link><Link>Plant</Link><Link>Actual</Link>
          <span className="text-right leading-[18px] whitespace-nowrap">Dough Pieces P/Hour</span>
          <F t="y" v="6835" className="h-[18px] ml-[11px] -mr-[11px]" /><F t="y" v="6835" className="h-[18px] ml-[11px] -mr-[11px]" /><F t="b" v="3600" className="h-[18px] ml-[11px] -mr-[11px]" />
          <span className="text-right leading-[18px] whitespace-nowrap">Dough Pieces P/Min</span><div /><div />
          <F t="b" v="60" className="h-[18px] ml-[11px] -mr-[11px]" />
          <span className="text-right leading-[18px] whitespace-nowrap">Throughput %</span><div /><div />
          <F t="b" v="52" className="h-[18px] ml-[11px] -mr-[11px]" />
        </div>
        <div className="pt-[2px]">
          <div className="flex h-[18px] items-center pl-[172px]">
            <div className="w-[50px]"><Link>Bakery</Link></div>
            <div className="w-[50px] ml-[24px]"><Link>Outside</Link></div>
          </div>
          <div className="flex h-[18px] items-center mt-[1px]">
            <span className="w-[149px] text-right">Temperature</span>
            <F t="b" v="28.20" u="°C" className="ml-[23px] w-[50px] h-[18px]" />
            <F t="b" v="13.0" u="°C" className="ml-[24px] w-[50px] h-[18px]" />
          </div>
          <div className="flex h-[18px] items-center mt-[3px]">
            <span className="w-[149px] text-right">Humidity</span>
            <F t="b" v="35.0" u="%" className="ml-[23px] w-[50px] h-[18px]" />
            <F t="b" v="0.0" u="%" className="ml-[24px] w-[50px] h-[18px]" />
          </div>
          <div className="flex h-[18px] items-center mt-[4px]">
            <span className="w-[149px] text-right">D Plant Dough Temp</span>
            <F t="b" v="29.6" u="°C" className="ml-[61px] w-[50px] h-[18px]" />
          </div>
          <div className="flex h-[18px] items-center mt-[3px]">
            <span className="w-[149px] text-right">D Plant Ambient Temp</span>
            <F t="b" v="24.3" u="°C" className="ml-[61px] w-[50px] h-[18px]" />
          </div>
        </div>
      </div>

      <div className="absolute left-[746px] top-[502px] w-[220px] h-[106px] border border-black pl-[12px] pt-[3px] text-[12px] text-[#181818]">
        <Legend className="left-[7px] -top-[9px]">Packing Details</Legend>
        <div className="ml-[109px] w-[50px] h-[17px]"><Link>Setpoint</Link></div>
        {[
          ['D1 Batch Count', '32000'], ['D2 Batch Count', '17000'], ['D3 Batch Count', '7000'], ['D4 Batch Count', '32000'],
        ].map(([l, v]) => (
          <div key={l} className="flex items-center h-[18px] mb-[2px]">
            <span className="w-[109px]">{l}</span>
            <F t="y" v={v} className="w-[50px] h-[18px]" />
          </div>
        ))}
      </div>

      <div className="absolute left-[51px] top-[617px] w-[888px] h-[20px] bg-[#b8f8c8] border-t border-l border-[#709078] pl-[7px] flex items-start pt-[1px] text-[11px] leading-[18px] text-[#181818] whitespace-nowrap">
        {stripItems.map(([n, w]) => (
          <span key={n} className={`shrink-0 ${w}`}>{n}</span>
        ))}
      </div>
    </div>
  )
}

function Link({ children }: { children: string }) {
  return <div className="text-center text-[#0000e0] underline text-[11.5px] leading-[17px] whitespace-nowrap">{children}</div>
}

export default function App() {
  return (
    <div className="w-[1920px] h-[631px] flex overflow-hidden bg-white">
      <Dashboard />
      <Plant />
    </div>
  )
}
